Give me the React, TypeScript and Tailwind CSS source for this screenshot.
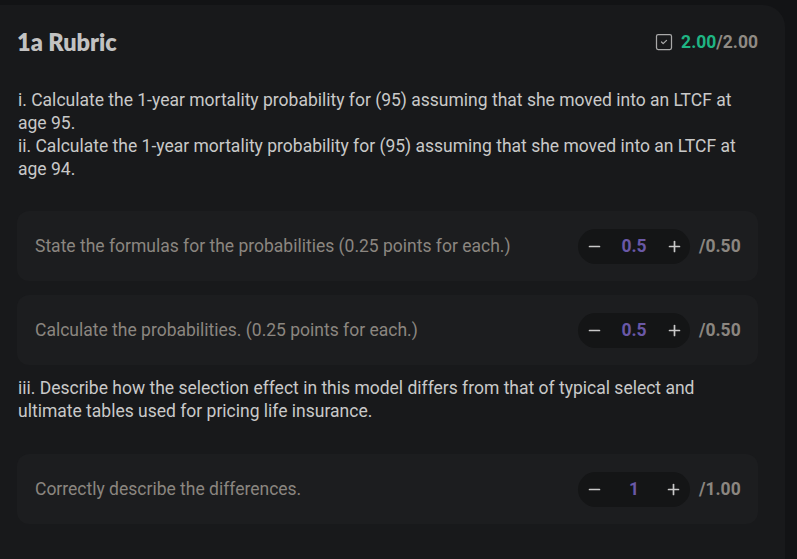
import { Minus, Plus, SquareCheck } from "lucide-react";

type Criterion = { label: string; value: string; max: string };

function CriterionRow({ label, value, max }: Criterion) {
  return (
    <div className="flex h-[70px] items-center justify-between rounded-xl bg-[#1c1d1f] pl-[18px] pr-[17px]">
      <span className="text-[17.5px] text-[#8b8680]">{label}</span>
      <div className="flex items-center gap-[9px]">
        <div className="flex h-[35px] w-[112px] items-center justify-between rounded-full bg-[#141516] px-[7.5px]">
          <button className="text-[#c9c9c9]">
            <Minus size={17} strokeWidth={2.4} />
          </button>
          <span className="text-[17.5px] font-bold text-[#6a58a6]">{value}</span>
          <button className="text-[#c9c9c9]">
            <Plus size={17} strokeWidth={2.4} />
          </button>
        </div>
        <span className="w-[42px] text-[17.5px] font-bold text-[#8b8680]">/{max}</span>
      </div>
    </div>
  );
}

export default function App() {
  return (
    <div
      className="min-h-[559px] bg-[#121315] pt-[5px] pr-[12px]"
      style={{ fontFamily: "Roboto, 'Liberation Sans', sans-serif" }}
    >
      <div className="min-h-[554px] rounded-tr-[22px] bg-[#18191b] pl-[17px] pr-[27px] pt-[23px]">
        <div className="flex h-[28px] items-center justify-between">
          <h1 className="font-['Lato',sans-serif] text-[23.5px] leading-[28px] font-extrabold text-[#c2c2c2]">1a Rubric</h1>
          <div className="flex items-center gap-[7px] text-[17.5px] font-bold">
            <SquareCheck size={20} strokeWidth={1.5} className="text-[#a9a9a9]" />
            <span>
              <span className="text-[#1fb584]">2.00</span>
              <span className="text-[#8f8a84]">/2.00</span>
            </span>
          </div>
        </div>

        <div className="mt-[33px] pl-px text-[17.5px] leading-[23px] text-[#c9c9c9]">
          <p>i. Calculate the 1-year mortality probability for (95) assuming that she moved into an LTCF at age 95.</p>
          <p>ii. Calculate the 1-year mortality probability for (95) assuming that she moved into an LTCF at age 94.</p>
        </div>

        <div className="mt-[30px] flex flex-col gap-[14px]">
          <CriterionRow label="State the formulas for the probabilities (0.25 points for each.)" value="0.5" max="0.50" />
          <CriterionRow label="Calculate the probabilities. (0.25 points for each.)" value="0.5" max="0.50" />
        </div>

        <p className="mt-[12px] pl-px text-[17.5px] leading-[23px] text-[#c9c9c9]">
          iii. Describe how the selection effect in this model differs from that of typical select and ultimate tables used for pricing life insurance.
        </p>

        <div className="mt-[31px]">
          <CriterionRow label="Correctly describe the differences." value="1" max="1.00" />
        </div>
      </div>
    </div>
  );
}
